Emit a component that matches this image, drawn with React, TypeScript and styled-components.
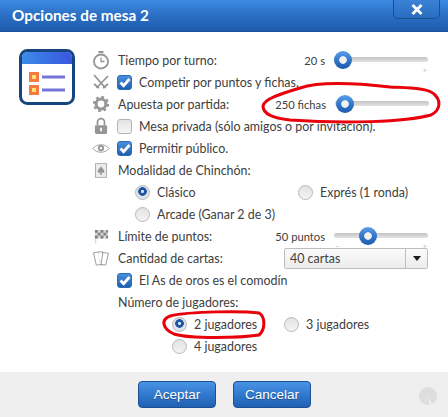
import { ReactNode } from "react";
import styled, { createGlobalStyle } from "styled-components";

const Global = createGlobalStyle`
  html, body { margin: 0; padding: 0; background: #fff; }
  * { box-sizing: border-box; }
`;

const Page = styled.div`
  position: relative;
  width: 448px;
  height: 417px;
  overflow: hidden;
  display: flex;
  flex-direction: column;
  background: #fff;
  font-family: Lato, "Open Sans", sans-serif;
  font-size: 12.45px;
  color: #404040;
`;

const TitleBar = styled.header`
  height: 32px;
  flex: none;
  display: flex;
  justify-content: space-between;
  padding: 0 8px 0 12px;
  background: linear-gradient(180deg, #3d8ae2 0%, #2a6fc4 50%, #1f5cac 100%);
  border-bottom: 1px solid #1d5096;
`;

const Title = styled.h1`
  margin: 0;
  font-size: 15.3px;
  font-weight: 700;
  line-height: 31px;
  color: #fff;
`;

const CloseButton = styled.button`
  width: 47px;
  height: 19px;
  padding: 0;
  display: flex;
  align-items: center;
  justify-content: center;
  background: linear-gradient(180deg, #3a82d8 0%, #2a6cbf 100%);
  border: 1px solid #1d4f90;
  border-top: 0;
  border-radius: 0 0 5px 5px;
`;

const Body = styled.main`
  flex: 1;
  display: flex;
  padding: 17px 20px 0 19px;
`;

const BigIcon = styled.div`
  width: 73px;
  flex: none;
`;

const Form = styled.div`
  flex: 1;
  display: flex;
  flex-direction: column;
`;

const Row = styled.div`
  height: 22px;
  display: flex;
  align-items: center;
`;

const IconCell = styled.span`
  width: 26px;
  flex: none;
  padding-right: 8px;
  display: flex;
  justify-content: center;
  align-items: center;
`;

const Label = styled.span`
  white-space: nowrap;
`;

const SliderValue = styled(Label)`
  font-size: 11.2px;
`;

const CheckBox = styled.span<{ $on?: boolean }>`
  width: 15px;
  height: 15px;
  flex: none;
  margin-right: 7px;
  margin-left: -1px;
  border-radius: 3px;
  display: flex;
  align-items: center;
  justify-content: center;
  border: 1px solid ${(p) => (p.$on ? "#2a6cb8" : "#b4b4b4")};
  background: ${(p) =>
    p.$on
      ? "linear-gradient(180deg, #4a8fdc, #1f5fae)"
      : "linear-gradient(180deg, #e4e4e4, #f6f6f6)"};
`;

const RadioItem = styled.label<{ $w?: number }>`
  width: ${(p) => (p.$w ? `${p.$w}px` : "auto")};
  display: flex;
  align-items: center;
  flex: none;
`;

const RadioDot = styled.span<{ $on?: boolean }>`
  width: 15px;
  height: 15px;
  margin-right: 7px;
  flex: none;
  border-radius: 50%;
  border: 1px solid #b8b8b8;
  background: ${(p) =>
    p.$on
      ? "radial-gradient(circle at 50% 42%, #dfe8f5 0 1.2px, #1d55a4 1.8px 4px, #dfe3ea 4.6px)"
      : "linear-gradient(180deg, #e2e2e2, #f4f4f4)"};
`;

const RadioRow = styled(Row)<{ $indent: number }>`
  padding-left: ${(p) => p.$indent}px;
`;

const SliderWrap = styled.div<{ $shift?: number }>`
  margin-left: auto;
  margin-right: ${(p) => -(p.$shift ?? 0)}px;
  display: flex;
  align-items: center;
  gap: 9px;
`;

const Track = styled.div`
  position: relative;
  width: 94px;
  height: 18px;
  &::before {
    content: "";
    position: absolute;
    left: 0;
    right: 0;
    top: 6px;
    height: 5px;
    border-radius: 3px;
    background: linear-gradient(180deg, #c4c4c4, #e2e2e2);
  }
`;

const Thumb = styled.span<{ $at: number }>`
  position: absolute;
  left: ${(p) => p.$at}px;
  top: 0;
  width: 18px;
  height: 18px;
  border-radius: 50%;
  background:
    radial-gradient(circle at 50% 50%, #f1f1f1 0 3.4px, transparent 4.2px),
    linear-gradient(180deg, #5a9fe6 0%, #2f74c9 55%, #1f5bab 100%);
`;

const Tick = styled.span<{ $side: "left" | "right" }>`
  position: absolute;
  top: 15px;
  ${(p) => p.$side}: 1px;
  font-size: 8px;
  line-height: 8px;
  color: #c4c4c4;
`;

const Select = styled.div`
  margin-left: auto;
  width: 144px;
  height: 21px;
  display: flex;
  align-items: center;
  border: 1px solid #bdbdbd;
  border-radius: 2px;
  background: linear-gradient(180deg, #fbfbfb, #ececec);
`;

const SelectValue = styled.span`
  flex: 1;
  padding-left: 5px;
`;

const SelectArrow = styled.span`
  width: 22px;
  height: 100%;
  display: flex;
  align-items: center;
  justify-content: center;
  border-left: 1px solid #bdbdbd;
  &::after {
    content: "";
    border-left: 4px solid transparent;
    border-right: 4px solid transparent;
    border-top: 5px solid #1c1c1c;
  }
`;

const Footer = styled.footer`
  height: 45px;
  flex: none;
  position: relative;
  display: flex;
  justify-content: center;
  gap: 17px;
  padding: 9px 0 0 1px;
  background: #efefef;
`;

const ActionButton = styled.button`
  width: 78px;
  height: 27px;
  padding: 0;
  font-family: "Liberation Sans", Arial, sans-serif;
  font-size: 13.5px;
  color: #fff;
  border: 1px solid #1c4f94;
  border-radius: 4px;
  background: linear-gradient(180deg, #4a94e6 0%, #3079cf 50%, #2160b2 100%);
  text-shadow: 0 1px 1px rgba(0, 0, 0, 0.3);
`;

const Spinner = styled.svg`
  position: absolute;
  right: 11px;
  top: 15px;
`;

const Annotations = styled.svg`
  position: absolute;
  inset: 0;
  pointer-events: none;
`;

const gray = "#969696";

const Tick2 = () => (
  <svg width="12" height="11" viewBox="0 0 12 11">
    <path d="M1.5 5.5 L4.6 8.6 L10.5 2" fill="none" stroke="#fff" strokeWidth="2.8" />
  </svg>
);

const Clock = () => (
  <svg width="16" height="19" viewBox="0 0 16 19">
    <rect x="5.5" y="0" width="5" height="2" fill={gray} />
    <circle cx="8" cy="10.5" r="7" fill="none" stroke={gray} strokeWidth="1.8" />
    <path d="M8 6.5 V10.5 H11.5" fill="none" stroke={gray} strokeWidth="1.3" />
  </svg>
);

const Swords = () => (
  <svg width="16" height="16" viewBox="0 0 16 16">
    <path d="M1 1 L12.5 14 M15 2 L3.5 14" stroke={gray} strokeWidth="1.8" />
    <path d="M10 14 L15 10 M6 14 L1 10" stroke={gray} strokeWidth="1.8" />
  </svg>
);

const Gear = () => (
  <svg width="16" height="16" viewBox="0 0 18 18">
    <circle cx="9" cy="9" r="5.5" fill="none" stroke={gray} strokeWidth="3.4" />
    <circle cx="9" cy="9" r="8" fill="none" stroke={gray} strokeWidth="2.2" strokeDasharray="3.2 3.1" />
  </svg>
);

const Lock = () => (
  <svg width="14" height="18" viewBox="0 0 16 20">
    <path d="M4 9 V5.5 a4 4 0 0 1 8 0 V9" fill="none" stroke={gray} strokeWidth="2" />
    <rect x="1" y="9" width="14" height="10" rx="1.5" fill={gray} />
    <rect x="7" y="12" width="2" height="4" fill="#fff" />
  </svg>
);

const Eye = () => (
  <svg width="19" height="11" viewBox="0 0 20 12">
    <path d="M1 6 C5 0.5 15 0.5 19 6 C15 11.5 5 11.5 1 6 Z" fill="none" stroke={gray} strokeWidth="1" />
    <circle cx="10" cy="5.6" r="3.4" fill={gray} />
    <circle cx="10" cy="5.6" r="1.3" fill="#fff" />
  </svg>
);

const Card = () => (
  <svg width="12" height="15" viewBox="0 0 14 17">
    <rect x="0.5" y="0.5" width="13" height="16" fill="#ececec" stroke="#a6a6a6" />
    <path d="M7 3.5 C8.5 6 11 7.5 11 9.8 C11 11.3 9 11.8 7.6 10.6 L8.4 13.5 H5.6 L6.4 10.6 C5 11.8 3 11.3 3 9.8 C3 7.5 5.5 6 7 3.5 Z" fill={gray} />
  </svg>
);

const Flag = () => (
  <svg width="15" height="15" viewBox="0 0 16 16">
    <path d="M1 1 H15 V10 H2.4 V15.5 H1 Z" fill="#d8d8d8" />
    <path d="M1 1h3v3H1z M7 1h3v3H7z M13 1h2v3h-2z M4 4h3v3H4z M10 4h3v3h-3z M1 7h3v3H1z M7 7h3v3H7z M13 7h2v3h-2z" fill="#808080" />
  </svg>
);

const Cards = () => (
  <svg width="18" height="15" viewBox="0 0 18 16">
    <path d="M1 2 L6.5 1 L8.5 14.5 L4 15 Z" fill="#fff" stroke={gray} strokeWidth="1" />
    <path d="M6 1 H11 L11.5 14.5 H8" fill="#fff" stroke={gray} strokeWidth="1" />
    <path d="M11 1.5 L17 2.5 L14 15 L9 14.5 Z" fill="#fff" stroke={gray} strokeWidth="1" />
  </svg>
);

const OptionsIcon = () => (
  <svg width="56" height="56" viewBox="0 0 56 56">
    <defs>
      <linearGradient id="head" x1="0" y1="0" x2="1" y2="0">
        <stop offset="0" stopColor="#3a8ce8" />
        <stop offset="1" stopColor="#3a55e0" />
      </linearGradient>
    </defs>
    <rect x="1.5" y="1.5" width="53" height="53" rx="7" fill="#fff" stroke="#17457f" strokeWidth="3" />
    <path d="M3 15 V8.5 a5.5 5.5 0 0 1 5.5 -5.5 H47.5 a5.5 5.5 0 0 1 5.5 5.5 V15 Z" fill="url(#head)" />
    <rect x="10" y="23" width="10" height="10" fill="#f57a40" />
    <rect x="13" y="26" width="4" height="4" fill="#ffe27a" />
    <rect x="10" y="36" width="10" height="10" fill="#f57a40" />
    <rect x="13" y="39" width="4" height="4" fill="#ffe27a" />
    <rect x="23" y="26.5" width="23" height="3" fill="#7474d8" />
    <rect x="23" y="39.5" width="23" height="3" fill="#7474d8" />
  </svg>
);

function Slider({ value, at, shift, minus }: { value: string; at: number; shift?: number; minus?: boolean }) {
  return (
    <SliderWrap $shift={shift}>
      <SliderValue>{value}</SliderValue>
      <Track>
        {minus && <Tick $side="left">−</Tick>}
        <Thumb $at={at} />
        <Tick $side="right">+</Tick>
      </Track>
    </SliderWrap>
  );
}

function Radio({ on, w, children }: { on?: boolean; w?: number; children: ReactNode }) {
  return (
    <RadioItem $w={w}>
      <RadioDot $on={on} />
      <Label>{children}</Label>
    </RadioItem>
  );
}

function Check({ on, children }: { on?: boolean; children: ReactNode }) {
  return (
    <>
      <CheckBox $on={on}>{on && <Tick2 />}</CheckBox>
      <Label>{children}</Label>
    </>
  );
}

export default function App() {
  return (
    <Page>
      <Global />
      <TitleBar>
        <Title>Opciones de mesa 2</Title>
        <CloseButton aria-label="Cerrar">
          <svg width="12" height="11" viewBox="0 0 12 11">
            <path d="M1.5 1 L10.5 10 M10.5 1 L1.5 10" stroke="#fff" strokeWidth="2.8" />
          </svg>
        </CloseButton>
      </TitleBar>
      <Body>
        <BigIcon>
          <OptionsIcon />
        </BigIcon>
        <Form>
          <Row>
            <IconCell><Clock /></IconCell>
            <Label>Tiempo por turno:</Label>
            <Slider value="20 s" at={0} />
          </Row>
          <Row>
            <IconCell><Swords /></IconCell>
            <Check on>Competir por puntos y fichas.</Check>
          </Row>
          <Row>
            <IconCell><Gear /></IconCell>
            <Label>Apuesta por partida:</Label>
            <Slider value="250 fichas" at={1} shift={1} />
          </Row>
          <Row>
            <IconCell><Lock /></IconCell>
            <Check>Mesa privada (sólo amigos o por invitación).</Check>
          </Row>
          <Row>
            <IconCell><Eye /></IconCell>
            <Check on>Permitir público.</Check>
          </Row>
          <Row>
            <IconCell><Card /></IconCell>
            <Label>Modalidad de Chinchón:</Label>
          </Row>
          <RadioRow $indent={43}>
            <Radio on w={163}>Clásico</Radio>
            <Radio>Exprés (1 ronda)</Radio>
          </RadioRow>
          <RadioRow $indent={43}>
            <Radio>Arcade (Ganar 2 de 3)</Radio>
          </RadioRow>
          <Row>
            <IconCell><Flag /></IconCell>
            <Label>Límite de puntos:</Label>
            <Slider value="50 puntos" at={25} minus />
          </Row>
          <Row>
            <IconCell><Cards /></IconCell>
            <Label>Cantidad de cartas:</Label>
            <Select>
              <SelectValue>40 cartas</SelectValue>
              <SelectArrow />
            </Select>
          </Row>
          <RadioRow $indent={26}>
            <Check on>El As de oros es el comodín</Check>
          </RadioRow>
          <RadioRow $indent={26}>
            <Label>Número de jugadores:</Label>
          </RadioRow>
          <RadioRow $indent={80}>
            <Radio on w={112}>2 jugadores</Radio>
            <Radio>3 jugadores</Radio>
          </RadioRow>
          <RadioRow $indent={80}>
            <Radio>4 jugadores</Radio>
          </RadioRow>
        </Form>
      </Body>
      <Footer>
        <ActionButton>Aceptar</ActionButton>
        <ActionButton>Cancelar</ActionButton>
        <Spinner width="18" height="18" viewBox="0 0 18 18">
          <path d="M9 9 L11 17.8 A9 9 0 1 1 18 9 A9 9 0 0 1 13 17 Z" fill="#dedede" />
        </Spinner>
      </Footer>
      <Annotations width="448" height="417" viewBox="0 0 448 417">
        <path
          d="M300 88 C315 83 345 82 390 87 C410 88 428 88 434 94 C441 100 441 110 431 115 C405 122 345 124 290 120 C272 118 263 114 263 106 C264 99 280 94 300 88"
          fill="none" stroke="#e8000b" strokeWidth="3"
        />
        <path
          d="M170 316 C190 311 245 311 259 313 C266 317 265 330 259 335 C240 338 190 339 174 334 C163 329 160 320 170 316"
          fill="none" stroke="#e8000b" strokeWidth="3"
        />
      </Annotations>
    </Page>
  );
}
